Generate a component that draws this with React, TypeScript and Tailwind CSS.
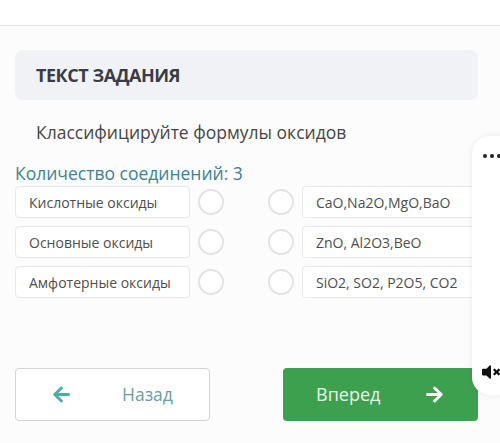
import { FaArrowLeft, FaArrowRight, FaVolumeMute } from "react-icons/fa";

const rows = [
  { left: "Кислотные оксиды", right: "CaO,Na2O,MgO,BaO" },
  { left: "Основные оксиды", right: "ZnO, Al2O3,BeO" },
  { left: "Амфотерные оксиды", right: "SiO2, SO2, P2O5, CO2" },
];

function Circle() {
  return <div className="h-[26px] w-[26px] shrink-0 rounded-full border-2 border-[#e3e3e3] bg-white" />;
}

export default function App() {
  return (
    <div
      className="relative h-[443px] w-[500px] overflow-hidden bg-[#fcfcfd]"
      style={{ fontFamily: '"Open Sans", sans-serif' }}
    >
      <div className="h-[26px] border-b border-[#e6e6e8] bg-white" />

      <div className="px-[15px] pt-[24px]">
        <div className="flex h-[50px] w-[463px] items-center rounded-lg bg-[#f1f2f6] px-[21px]">
          <span className="text-[18px] font-bold leading-[24px] tracking-tight text-[#393c45]">ТЕКСТ ЗАДАНИЯ</span>
        </div>

        <p className="mt-[20px] pl-[21px] text-[17.5px] leading-[24px] text-[#464646]">
          Классифицируйте формулы оксидов
        </p>

        <p className="mt-[17px] text-[17.5px] leading-[24px] text-[#3c8390]">Количество соединений: 3</p>

        <div className="mt-[1px] flex flex-col gap-[8px]">
          {rows.map((r) => (
            <div key={r.left} className="flex h-[32px] items-center">
              <div className="flex h-full w-[175px] shrink-0 items-center rounded border border-[#e8e8e8] bg-white pl-[13px] text-[14px] text-[#4e4e4e]">
                {r.left}
              </div>
              <div className="ml-[8px]">
                <Circle />
              </div>
              <div className="ml-[44px]">
                <Circle />
              </div>
              <div className="ml-[8px] flex h-full w-[200px] shrink-0 items-center rounded border border-[#e8e8e8] bg-white pl-[13px] text-[14px] text-[#4e4e4e]">
                {r.right}
              </div>
            </div>
          ))}
        </div>

        <div className="mt-[70px] flex items-center">
          <button className="flex h-[53px] w-[195px] shrink-0 items-center rounded border border-[#cfd4d6] bg-white">
            <FaArrowLeft className="ml-[36px] text-[19px] text-[#4aaea6]" />
            <span className="ml-[51px] text-[17.5px] text-[#6a9ea0]">Назад</span>
          </button>
          <button className="ml-[73px] flex h-[53px] w-[195px] shrink-0 items-center rounded bg-[#3da04f]">
            <span className="ml-[33px] text-[18px] text-[#e9f6ea]">Вперед</span>
            <FaArrowRight className="ml-[45px] text-[19px] text-white" />
          </button>
        </div>
      </div>

      <div className="absolute left-[472px] top-[136px] h-[259px] w-[60px] rounded-l-[18px] bg-white shadow-[0_0_6px_rgba(0,0,0,0.08)]">
        <div className="ml-[11px] mt-[18px] flex gap-[3px]">
          <span className="h-[4px] w-[4px] rounded-full bg-[#222]" />
          <span className="h-[4px] w-[4px] rounded-full bg-[#222]" />
          <span className="h-[4px] w-[4px] rounded-full bg-[#222]" />
        </div>
        <FaVolumeMute className="absolute left-[10px] top-[227px] text-[18px] text-[#111]" />
      </div>
    </div>
  );
}
